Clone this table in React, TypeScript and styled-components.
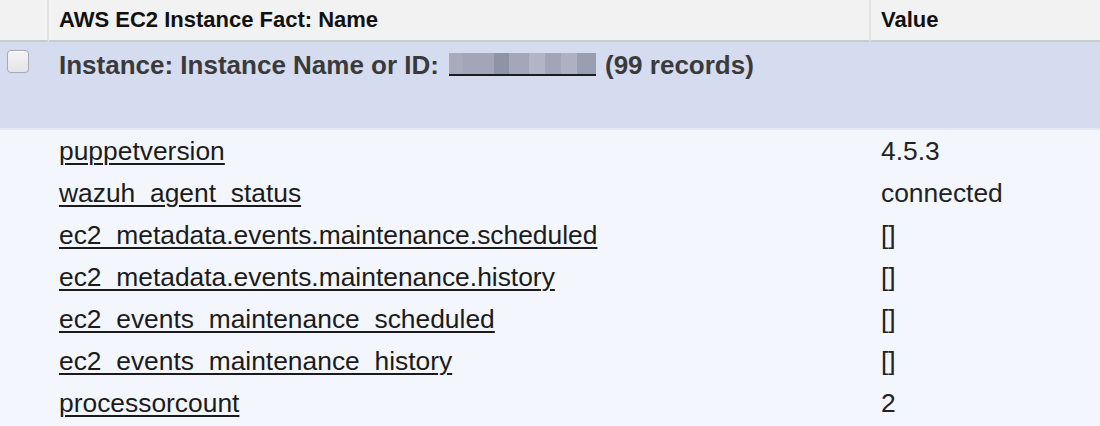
import React from "react";
import styled, { createGlobalStyle } from "styled-components";

const Global = createGlobalStyle`
  html, body {
    margin: 0;
    padding: 0;
    background: #f3f6fd;
  }
  body {
    font-family: "Liberation Sans", Arial, Helvetica, sans-serif;
  }
`;

const Table = styled.div`
  width: 1100px;
  display: grid;
  grid-template-columns: 49px 822px 1fr;
  background: #f3f6fd;
`;

const HeadCell = styled.div<{ $last?: boolean }>`
  height: 42px;
  box-sizing: border-box;
  background: #f2f2f2;
  border-bottom: 2px solid #c8cbd2;
  border-right: ${(p) => (p.$last ? "none" : "2px solid #e3e3e3")};
  display: flex;
  align-items: center;
  padding-left: 10px;
  font-size: 22px;
  font-weight: bold;
  color: #111;
  white-space: nowrap;
`;

const GroupRow = styled.div`
  grid-column: 1 / -1;
  height: 88px;
  box-sizing: border-box;
  background: #d6dcef;
  border-bottom: 2px solid #e4e8f3;
  display: flex;
  align-items: flex-start;
  padding-top: 8px;
`;

const CheckBox = styled.span`
  display: block;
  width: 20px;
  height: 21px;
  margin: 0 0 0 7px;
  border: 1px solid #a9a9ae;
  border-radius: 4px;
  background: linear-gradient(#f4f4f6, #e4e4e8);
  box-shadow: inset 0 1px 1px rgba(255, 255, 255, 0.8), 0 0 1px rgba(0, 0, 0, 0.15);
  flex: none;
`;

const GroupLabel = styled.div`
  margin-left: 30px;
  font-size: 26px;
  font-weight: bold;
  color: #3a3a3a;
  line-height: 31px;
  white-space: nowrap;
  display: flex;
  align-items: baseline;
`;

const Redacted = styled.span`
  display: inline-block;
  width: 147px;
  height: 21px;
  margin: 0 9px 0 10px;
  position: relative;
  top: 2px;
  border-bottom: 2px solid #1c1c1c;
  background: linear-gradient(
    90deg,
    #a7abbc 0 14px,
    #a2a6b8 14px 45px,
    #8e93a6 45px 60px,
    #a3a7b9 60px 80px,
    #b1b5c6 80px 96px,
    #a1a5b7 96px 112px,
    #adb1c2 112px 128px,
    #9a9eb1 128px 147px
  );
`;

const Spacer = styled.div``;

const NameCell = styled.div`
  height: 42px;
  display: flex;
  align-items: center;
  padding-left: 10px;
  font-size: 26.4px;
  white-space: nowrap;
`;

const FactLink = styled.a`
  color: #1b1b1b;
  text-decoration: underline;
  text-decoration-thickness: 2px;
  text-underline-offset: 3px;
`;

const ValueCell = styled.div`
  height: 42px;
  display: flex;
  align-items: center;
  padding-left: 10px;
  font-size: 26.4px;
  color: #222;
  white-space: nowrap;
`;

const rows: [string, string][] = [
  ["puppetversion", "4.5.3"],
  ["wazuh_agent_status", "connected"],
  ["ec2_metadata.events.maintenance.scheduled", "[]"],
  ["ec2_metadata.events.maintenance.history", "[]"],
  ["ec2_events_maintenance_scheduled", "[]"],
  ["ec2_events_maintenance_history", "[]"],
  ["processorcount", "2"],
];

export default function App() {
  return (
    <>
      <Global />
      <Table>
        <HeadCell />
        <HeadCell>AWS EC2 Instance Fact: Name</HeadCell>
        <HeadCell $last>Value</HeadCell>
        <GroupRow>
          <CheckBox />
          <GroupLabel>
            Instance: Instance Name or ID:
            <Redacted />
            (99 records)
          </GroupLabel>
        </GroupRow>
        {rows.map(([name, value]) => (
          <React.Fragment key={name}>
            <Spacer />
            <NameCell>
              <FactLink href="#">{name}</FactLink>
            </NameCell>
            <ValueCell>{value}</ValueCell>
          </React.Fragment>
        ))}
      </Table>
    </>
  );
}
